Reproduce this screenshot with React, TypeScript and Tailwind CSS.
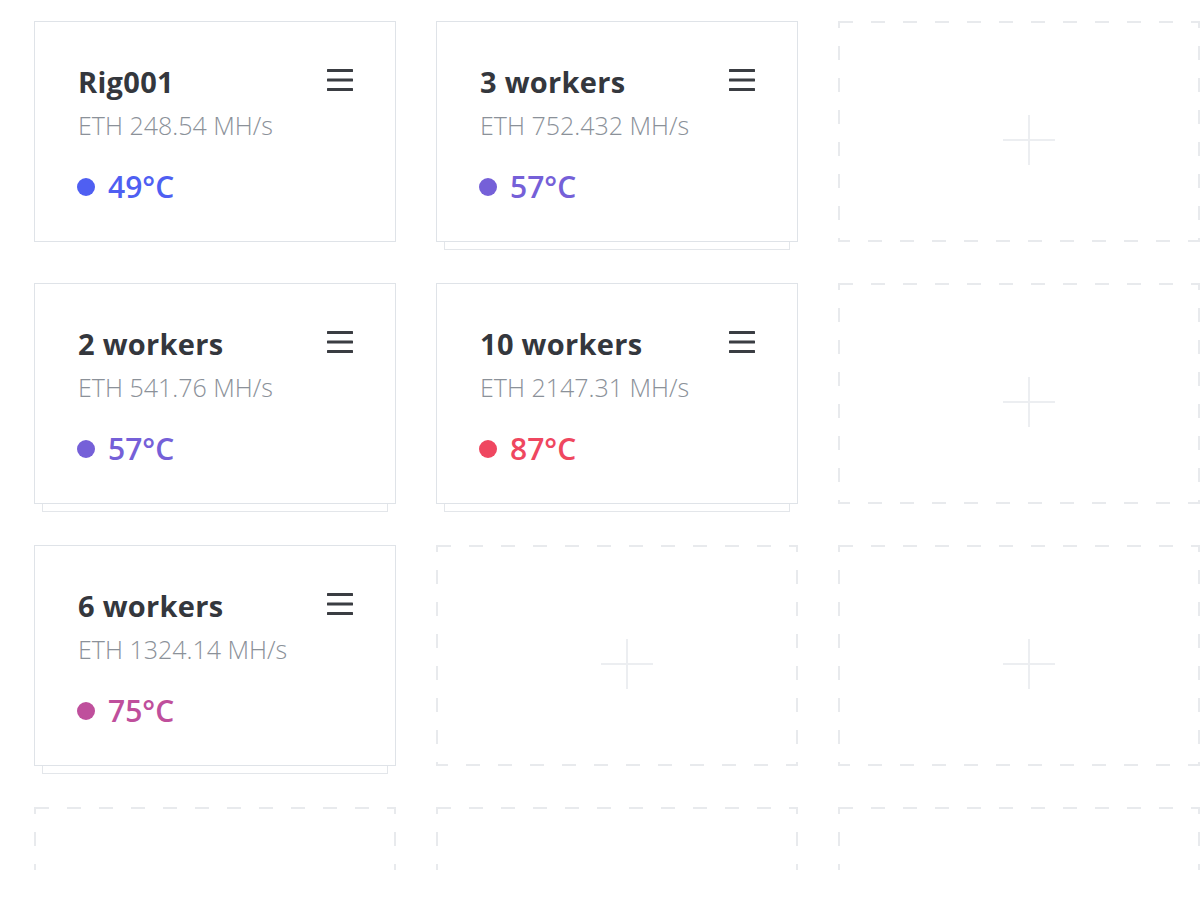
import React from "react";

type Rig = {
  name: string;
  rate: string;
  temp: number;
  color: string;
  dot: string;
  stacked: boolean;
};

const rigs: (Rig | null)[] = [
  { name: "Rig001", rate: "ETH 248.54 MH/s", temp: 49, color: "text-[#4f5ff2]", dot: "bg-[#4f5ff2]", stacked: false },
  { name: "3 workers", rate: "ETH 752.432 MH/s", temp: 57, color: "text-[#7560d8]", dot: "bg-[#7560d8]", stacked: true },
  null,
  { name: "2 workers", rate: "ETH 541.76 MH/s", temp: 57, color: "text-[#7560d8]", dot: "bg-[#7560d8]", stacked: true },
  { name: "10 workers", rate: "ETH 2147.31 MH/s", temp: 87, color: "text-[#ef4760]", dot: "bg-[#ef4760]", stacked: true },
  null,
  { name: "6 workers", rate: "ETH 1324.14 MH/s", temp: 75, color: "text-[#bf4f9c]", dot: "bg-[#bf4f9c]", stacked: true },
  null,
  null,
  null,
  null,
  null,
];

function MenuIcon() {
  return (
    <svg width="26" height="24" viewBox="0 0 26 24" className="text-[#3a3d42]">
      <path d="M1 2.5h24M1 12h24M1 21.5h24" stroke="currentColor" strokeWidth="3" strokeLinecap="round" />
    </svg>
  );
}

function RigCard({ rig }: { rig: Rig }) {
  return (
    <div className="relative h-full">
      {rig.stacked && (
        <div className="absolute left-[8px] right-[8px] top-[8px] -bottom-[8px] border border-[#e3e6ea] bg-white" />
      )}
      <div className="relative h-full border border-[#dfe3e8] bg-white pl-[43px] pr-[42px] pt-[44px]">
        <div className="relative">
          <h2 className="text-[29px] font-bold leading-[32px] tracking-[0.3px] text-[#34373d]">{rig.name}</h2>
          <div className="absolute right-0 top-[2px]">
            <MenuIcon />
          </div>
        </div>
        <p className="mt-[12px] text-[25px] font-light leading-[30px] text-[#8b9199]">{rig.rate}</p>
        <div className="mt-[31px] flex items-center">
          <span className={`-ml-[1px] h-[18px] w-[18px] rounded-full ${rig.dot}`} />
          <span className={`ml-[13px] text-[30px] font-semibold leading-[32px] ${rig.color}`}>{rig.temp}°C</span>
        </div>
      </div>
    </div>
  );
}

function EmptySlot() {
  return (
    <div className="relative flex h-full items-center justify-center pl-[20px] pt-[16px]">
      <svg className="absolute inset-0 h-full w-full" preserveAspectRatio="none">
        <rect
          x="1"
          y="1"
          width="calc(100% - 2px)"
          height="calc(100% - 2px)"
          fill="none"
          stroke="#e8eaed"
          strokeWidth="2"
          strokeDasharray="14 18"
        />
      </svg>
      <svg width="52" height="50" viewBox="0 0 52 50">
        <path d="M0 25h52M26 0v50" stroke="#eceef1" strokeWidth="2" />
      </svg>
    </div>
  );
}

export default function App() {
  return (
    <div className="h-[902px] w-[1200px] overflow-hidden bg-white" style={{ fontFamily: "'Open Sans', Lato, sans-serif" }}>
      <div className="h-[870px] overflow-hidden pl-[34px] pt-[21px]">
        <div className="grid grid-cols-[362px_362px_362px] auto-rows-[221px] gap-x-[40px] gap-y-[41px]">
          {rigs.map((rig, i) => (
            <div key={i}>{rig ? <RigCard rig={rig} /> : <EmptySlot />}</div>
          ))}
        </div>
      </div>
    </div>
  );
}
